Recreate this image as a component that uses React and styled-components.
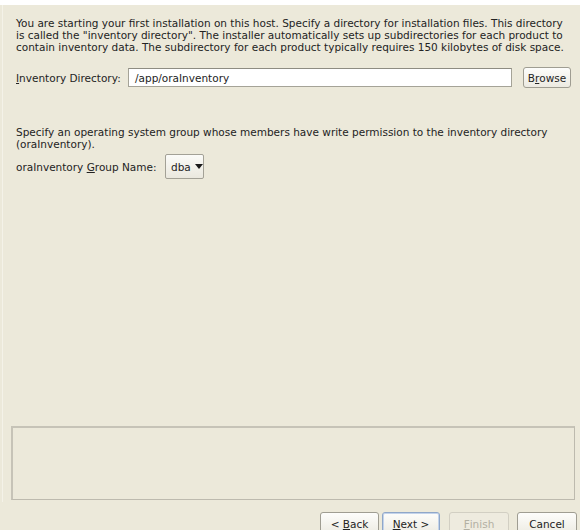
import React from "react";
import styled, { createGlobalStyle } from "styled-components";

const Global = createGlobalStyle`
  html, body { margin: 0; padding: 0; height: 530px; overflow: hidden; }
  body { background: #ECE9DA; font-family: "DejaVu Sans", sans-serif; color: #232323; }
`;

const Window = styled.div`
  width: 580px;
  height: 530px;
  display: flex;
  flex-direction: column;
  background: #ECE9DA;
  font-size: 10.5px;
`;

const TopStrip = styled.div`
  height: 5px;
  background: #ffffff;
  flex: none;
`;

const Main = styled.div`
  flex: 1;
  display: flex;
  flex-direction: column;
  margin-left: 2px;
  border-left: 1px solid #F4F2E8;
  padding: 12px 5px 2px 8px;
  min-height: 0;
`;

const Content = styled.div`
  flex: 1;
  padding: 0 4px 0 5px;
`;

const Para = styled.div`
  line-height: 12px;
  white-space: nowrap;
  margin-top: ${(p) => p.$mt || 0}px;
`;

const Row = styled.div`
  display: flex;
  align-items: center;
  margin-top: ${(p) => p.$mt || 0}px;
  height: ${(p) => p.$h || 21}px;
`;

const Label = styled.div`
  width: ${(p) => (p.$w ? `${p.$w}px` : "auto")};
  flex: none;
  white-space: nowrap;
`;

const TextField = styled.div`
  flex: 1;
  height: 19px;
  box-sizing: border-box;
  border: 1px solid #A5A397;
  border-top-color: #8E8C82;
  background: #ffffff;
  display: flex;
  align-items: center;
  padding-left: 6px;
`;

const Button = styled.div`
  box-sizing: border-box;
  width: ${(p) => p.$w}px;
  height: ${(p) => p.$h || 22}px;
  margin-left: ${(p) => p.$ml || 0}px;
  flex: none;
  display: flex;
  align-items: center;
  justify-content: center;
  border: 1px solid ${(p) => (p.$default ? "#8FA7C9" : p.$disabled ? "#D2CFC3" : "#9F9D92")};
  box-shadow: ${(p) => (p.$default ? "inset 0 0 0 1px #C3D3EA" : "none")};
  border-radius: 3px;
  background: ${(p) => (p.$disabled ? "#EEEBDF" : "linear-gradient(#FDFDFB, #ECEAE1)")};
  color: ${(p) => (p.$disabled ? "#B3B0A3" : "#232323")};
  white-space: pre;
`;

const U = styled.span`
  text-decoration: underline;
  text-underline-offset: 1px;
`;

const Combo = styled.div`
  box-sizing: border-box;
  width: 39px;
  height: 25px;
  border: 1px solid #A3A196;
  border-radius: 2px;
  background: linear-gradient(#FBFBF8, #EAE8DE);
  display: flex;
  align-items: center;
  gap: 4px;
  padding-left: 5px;
`;

const MessageBox = styled.div`
  height: 74px;
  box-sizing: border-box;
  border: 1px solid #BDBAAE;
  border-top: 2px solid #C6C3B7;
  border-left: 2px solid #C6C3B7;
  background: #ECE9DA;
  flex: none;
`;

const Footer = styled.div`
  flex: none;
  display: flex;
  justify-content: flex-end;
  padding: 10px 3px 0 0;
  height: 18px;
`;

export default function App() {
  return (
    <Window>
      <Global />
      <TopStrip />
      <Main>
        <Content>
          <Para>
            You are starting your first installation on this host. Specify a directory for installation files. This directory
            <br />
            is called the "inventory directory". The installer automatically sets up subdirectories for each product to
            <br />
            contain inventory data. The subdirectory for each product typically requires 150 kilobytes of disk space.
          </Para>
          <Row $mt={14}>
            <Label $w={112}>
              <U>I</U>nventory Directory:
            </Label>
            <TextField>/app/oraInventory</TextField>
            <Button $w={48} $h={21} $ml={11}>
              B<U>r</U>owse
            </Button>
          </Row>
          <Para $mt={38}>
            Specify an operating system group whose members have write permission to the inventory directory
            <br />
            (oraInventory).
          </Para>
          <Row $mt={4} $h={25}>
            <Label $w={149}>
              oraInventory <U>G</U>roup Name:
            </Label>
            <Combo>
              dba
              <svg width="8" height="5" viewBox="0 0 8 5">
                <path d="M0 0 H8 L4 5 Z" fill="#1a1a1a" />
              </svg>
            </Combo>
          </Row>
        </Content>
        <MessageBox />
      </Main>
      <Footer>
        <Button $w={59} $h={24}>
          {"< "}
          <U>B</U>ack
        </Button>
        <Button $w={58} $h={24} $ml={3} $default>
          <U>N</U>
          {"ext >"}
        </Button>
        <Button $w={60} $h={24} $ml={9} $disabled>
          <U>F</U>inish
        </Button>
        <Button $w={60} $h={24} $ml={8}>
          Cancel
        </Button>
      </Footer>
    </Window>
  );
}
